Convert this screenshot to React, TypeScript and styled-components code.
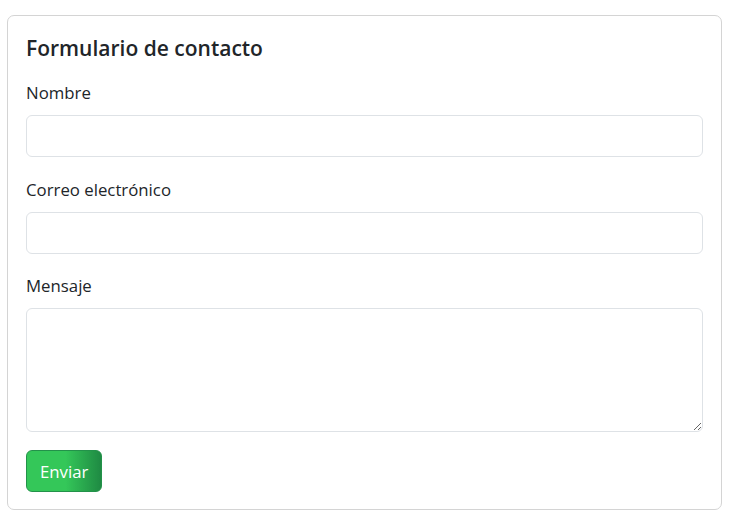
import React from "react";
import styled, { createGlobalStyle } from "styled-components";

const Global = createGlobalStyle`
  html, body { margin: 0; padding: 0; background: #ffffff; }
  body { font-family: "Open Sans", "Noto Sans", sans-serif; color: #212529; }
  * { box-sizing: border-box; }
`;

const Page = styled.div`
  padding: 15px 11px 5px 7px;
`;

const Card = styled.form`
  border: 1px solid #d4d4d4;
  border-radius: 7px;
  padding: 18px 18px 17px;
  display: flex;
  flex-direction: column;
`;

const Title = styled.h2`
  margin: 0 0 19px;
  font-size: 21px;
  line-height: 28px;
  font-weight: 600;
  color: #212529;
`;

const Field = styled.div<{ $gap: number }>`
  display: flex;
  flex-direction: column;
  margin-bottom: ${(p) => p.$gap}px;
`;

const Label = styled.label`
  font-size: 16.8px;
  line-height: 24px;
  margin-bottom: 10px;
  color: #212529;
`;

const Input = styled.input`
  height: 42px;
  border: 1px solid #dee2e6;
  border-radius: 6px;
  padding: 6px 12px;
  font: inherit;
  outline: none;
`;

const TextArea = styled.textarea`
  height: 124px;
  border: 1px solid #dee2e6;
  border-radius: 6px;
  padding: 6px 12px;
  font: inherit;
  outline: none;
  resize: vertical;
`;

const Button = styled.button`
  align-self: flex-start;
  height: 42px;
  padding: 0 13px;
  border: 1px solid #23924a;
  border-radius: 6px;
  background: linear-gradient(to right, #34c759 0%, #34c759 52%, #1f8a43 100%);
  color: #ffffff;
  font-family: "Open Sans", "Noto Sans", sans-serif;
  font-size: 16.8px;
  cursor: pointer;
`;

export default function App() {
  return (
    <Page>
      <Global />
      <Card onSubmit={(e) => e.preventDefault()}>
        <Title>Formulario de contacto</Title>
        <Field $gap={21}>
          <Label htmlFor="nombre">Nombre</Label>
          <Input id="nombre" type="text" />
        </Field>
        <Field $gap={20}>
          <Label htmlFor="correo">Correo electrónico</Label>
          <Input id="correo" type="email" />
        </Field>
        <Field $gap={18}>
          <Label htmlFor="mensaje">Mensaje</Label>
          <TextArea id="mensaje" />
        </Field>
        <Button type="submit">Enviar</Button>
      </Card>
    </Page>
  );
}
